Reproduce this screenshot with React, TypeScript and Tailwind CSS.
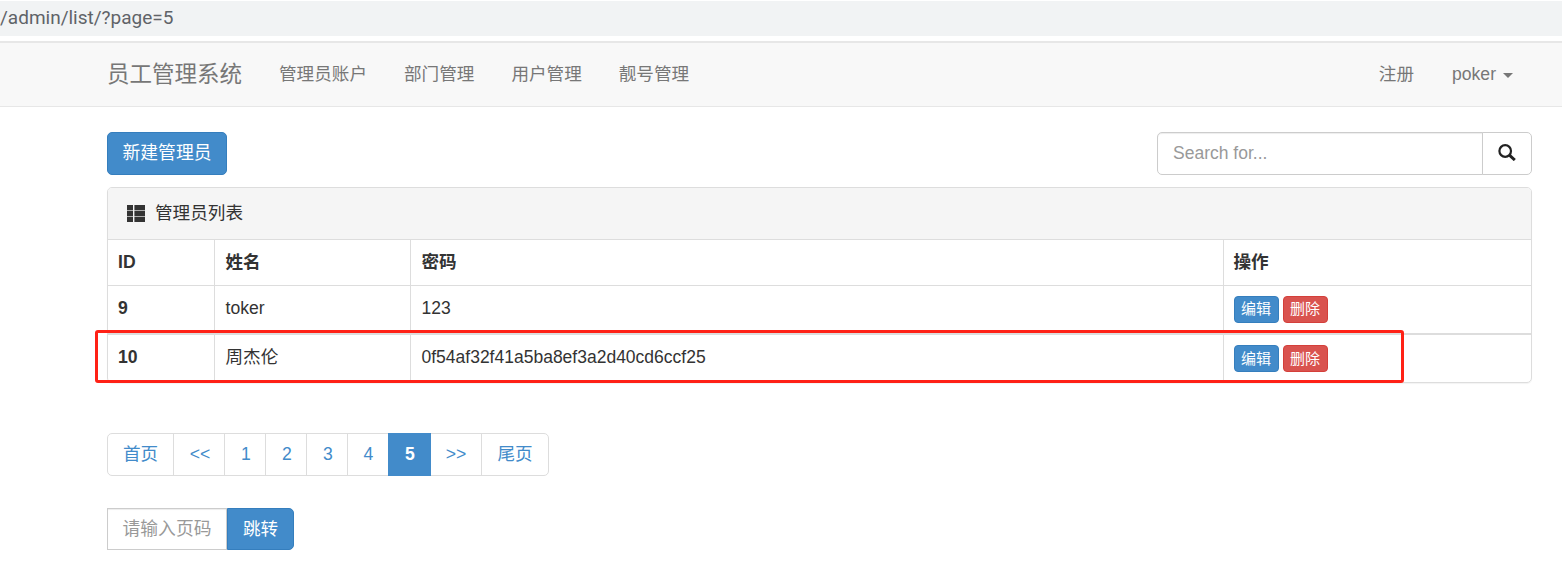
export default function App() {
  const pages = [
    { t: "首页", w: "w-[66px]", nudge: "" },
    { t: "<<", w: "w-[51px]", nudge: "pl-[2px]" },
    { t: "1", w: "w-[41px]", nudge: "pl-[2px]" },
    { t: "2", w: "w-[41px]", nudge: "pl-[2px]" },
    { t: "3", w: "w-[41px]", nudge: "pl-[2px]" },
    { t: "4", w: "w-[41px]", nudge: "" },
    { t: "5", w: "w-[43px]", nudge: "pl-px", active: true },
    { t: ">>", w: "w-[51px]", nudge: "" },
    { t: "尾页", w: "w-[66px]", nudge: "" },
  ];
  const th = "border-r-[1.5px] border-[#ddd] pl-[11px] pr-[10px] text-left font-bold align-middle";
  const td = "border-r-[1.5px] border-[#ddd] pl-[11px] pr-[10px] pb-[2px] text-left align-middle";
  const rows = [
    { id: "9", name: "toker", pw: "123", h: "h-[49px]", border: "border-b-2 border-[#ddd]" },
    { id: "10", name: "周杰伦", pw: "0f54af32f41a5ba8ef3a2d40cd6ccf25", h: "h-[48px]", border: "" },
  ];
  return (
    <div className="relative h-[567px] w-[1562px] overflow-hidden bg-white text-[17.6px] leading-[25px] text-[#333] font-['Liberation_Sans','Noto_Sans_CJK_SC',sans-serif]">
      <div className="mt-px flex h-[35px] items-center bg-[#f1f3f4] text-[#5f6368] text-[19px] font-['Roboto','Liberation_Sans',sans-serif]">
        <span className="-mt-[2px]">/admin/list/?page=5</span>
      </div>

      <nav className="mt-[5px] flex h-[66px] items-center justify-between border-t-2 border-b border-[#e7e7e7] bg-[#f8f8f8] pl-[107px] pr-[30px] text-[#777]">
        <div className="flex items-center">
          <span className="mr-[37px] w-[135px] text-[22.5px] whitespace-nowrap">员工管理系统</span>
          <div className="flex gap-[37px]">
            <span>管理员账户</span>
            <span>部门管理</span>
            <span>用户管理</span>
            <span>靓号管理</span>
          </div>
        </div>
        <div className="flex items-center pr-[19px]">
          <span className="mr-[38px]">注册</span>
          <span>poker</span>
          <span className="ml-[7px] mt-[2px] h-0 w-0 border-x-[5px] border-t-[5px] border-x-transparent border-t-[#777]" />
        </div>
      </nav>

      <main className="pl-[107px] pr-[30px] pt-[25px]">
        <div className="flex items-center justify-between">
          <button className="h-[43px] w-[120px] rounded-[5px] border border-[#357ebd] bg-[#428bca] text-[17.8px] text-white">新建管理员</button>
          <div className="flex h-[43px] w-[375px]">
            <input
              readOnly
              placeholder="Search for..."
              className="min-w-0 flex-1 rounded-l-[5px] border border-[#ccc] bg-white px-[15px] text-[17.5px] text-[#555] placeholder:text-[#999] shadow-[inset_0_1px_1px_rgba(0,0,0,0.075)] outline-none"
            />
            <div className="-ml-px flex w-[50px] items-center justify-center rounded-r-[5px] border border-[#ccc] bg-white">
              <svg viewBox="0 0 18 17" className="-mt-[3px] h-[17px] w-[18px]" fill="none" stroke="#222" strokeWidth="2.2">
                <circle cx="7.2" cy="7" r="5.8" />
                <path d="M11.4 11.2 16.8 16" strokeWidth="3" />
              </svg>
            </div>
          </div>
        </div>

        <div className="mt-3 overflow-hidden rounded-[5px] border border-[#ddd] shadow-[0_1px_1px_rgba(0,0,0,0.05)]">
          <div className="flex h-[52px] items-center border-b border-[#ddd] bg-[#f5f5f5] pl-[19px]">
            <svg viewBox="0 0 18 17" className="h-[17px] w-[18px]" fill="#333">
              <rect x="0" y="0" width="6" height="5.3" />
              <rect x="7.4" y="0" width="10.6" height="5.3" />
              <rect x="0" y="5.9" width="6" height="5.3" />
              <rect x="7.4" y="5.9" width="10.6" height="5.3" />
              <rect x="0" y="11.8" width="6" height="5.2" />
              <rect x="7.4" y="11.8" width="10.6" height="5.2" />
            </svg>
            <span className="ml-[10px]">管理员列表</span>
          </div>
          <table className="w-full table-fixed border-collapse">
            <colgroup>
              <col className="w-[106px]" />
              <col className="w-[196px]" />
              <col className="w-[813px]" />
              <col />
            </colgroup>
            <thead>
              <tr className="h-[45px] border-b-[1.5px] border-[#ddd]">
                <th className={`${th} !pl-[10px]`}>ID</th>
                <th className={th}>姓名</th>
                <th className={th}>密码</th>
                <th className="px-[10px] text-left font-bold">操作</th>
              </tr>
            </thead>
            <tbody>
              {rows.map((r) => (
                <tr key={r.id} className={`${r.h} ${r.border}`}>
                  <td className={`${td} !pl-[10px] font-bold`}>{r.id}</td>
                  <td className={td}>{r.name}</td>
                  <td className={`${td} text-[17.5px]`}>{r.pw}</td>
                  <td className="px-[10px] align-middle">
                    <div className="flex gap-[4px]">
                      <button className="h-[27px] w-[45px] rounded-[4px] border border-[#357ebd] bg-[#428bca] pb-px text-[15px] leading-none text-white">编辑</button>
                      <button className="h-[27px] w-[45px] rounded-[4px] border border-[#d43f3a] bg-[#d9534f] pb-px text-[15px] leading-none text-white">删除</button>
                    </div>
                  </td>
                </tr>
              ))}
            </tbody>
          </table>
        </div>

        <div className="mt-[50px] flex h-[43px] w-[442px] rounded-[5px] border border-[#ddd]">
          {pages.map((p, i) => (
            <span
              key={p.t}
              className={`${p.w} ${p.nudge} flex shrink-0 items-center justify-center ${
                p.active
                  ? "-my-px -ml-px bg-[#428bca] font-bold text-white"
                  : `text-[#428bca] ${i < pages.length - 1 && !pages[i + 1].active ? "border-r border-[#ddd]" : ""}`
              }`}
            >
              {p.t}
            </span>
          ))}
        </div>

        <div className="mt-[32px] flex h-[42px] w-[187px]">
          <div className="flex w-[120px] items-center justify-center border border-[#ccc] text-[17.8px] text-[#999] shadow-[inset_0_1px_1px_rgba(0,0,0,0.075)]">请输入页码</div>
          <button className="flex-1 rounded-r-[5px] border border-[#357ebd] bg-[#428bca] text-white">跳转</button>
        </div>
      </main>

      <div className="pointer-events-none absolute left-[95px] top-[330px] h-[53px] w-[1309px] rounded-[3px] border-[3px] border-[#ff2116]" />
    </div>
  );
}
